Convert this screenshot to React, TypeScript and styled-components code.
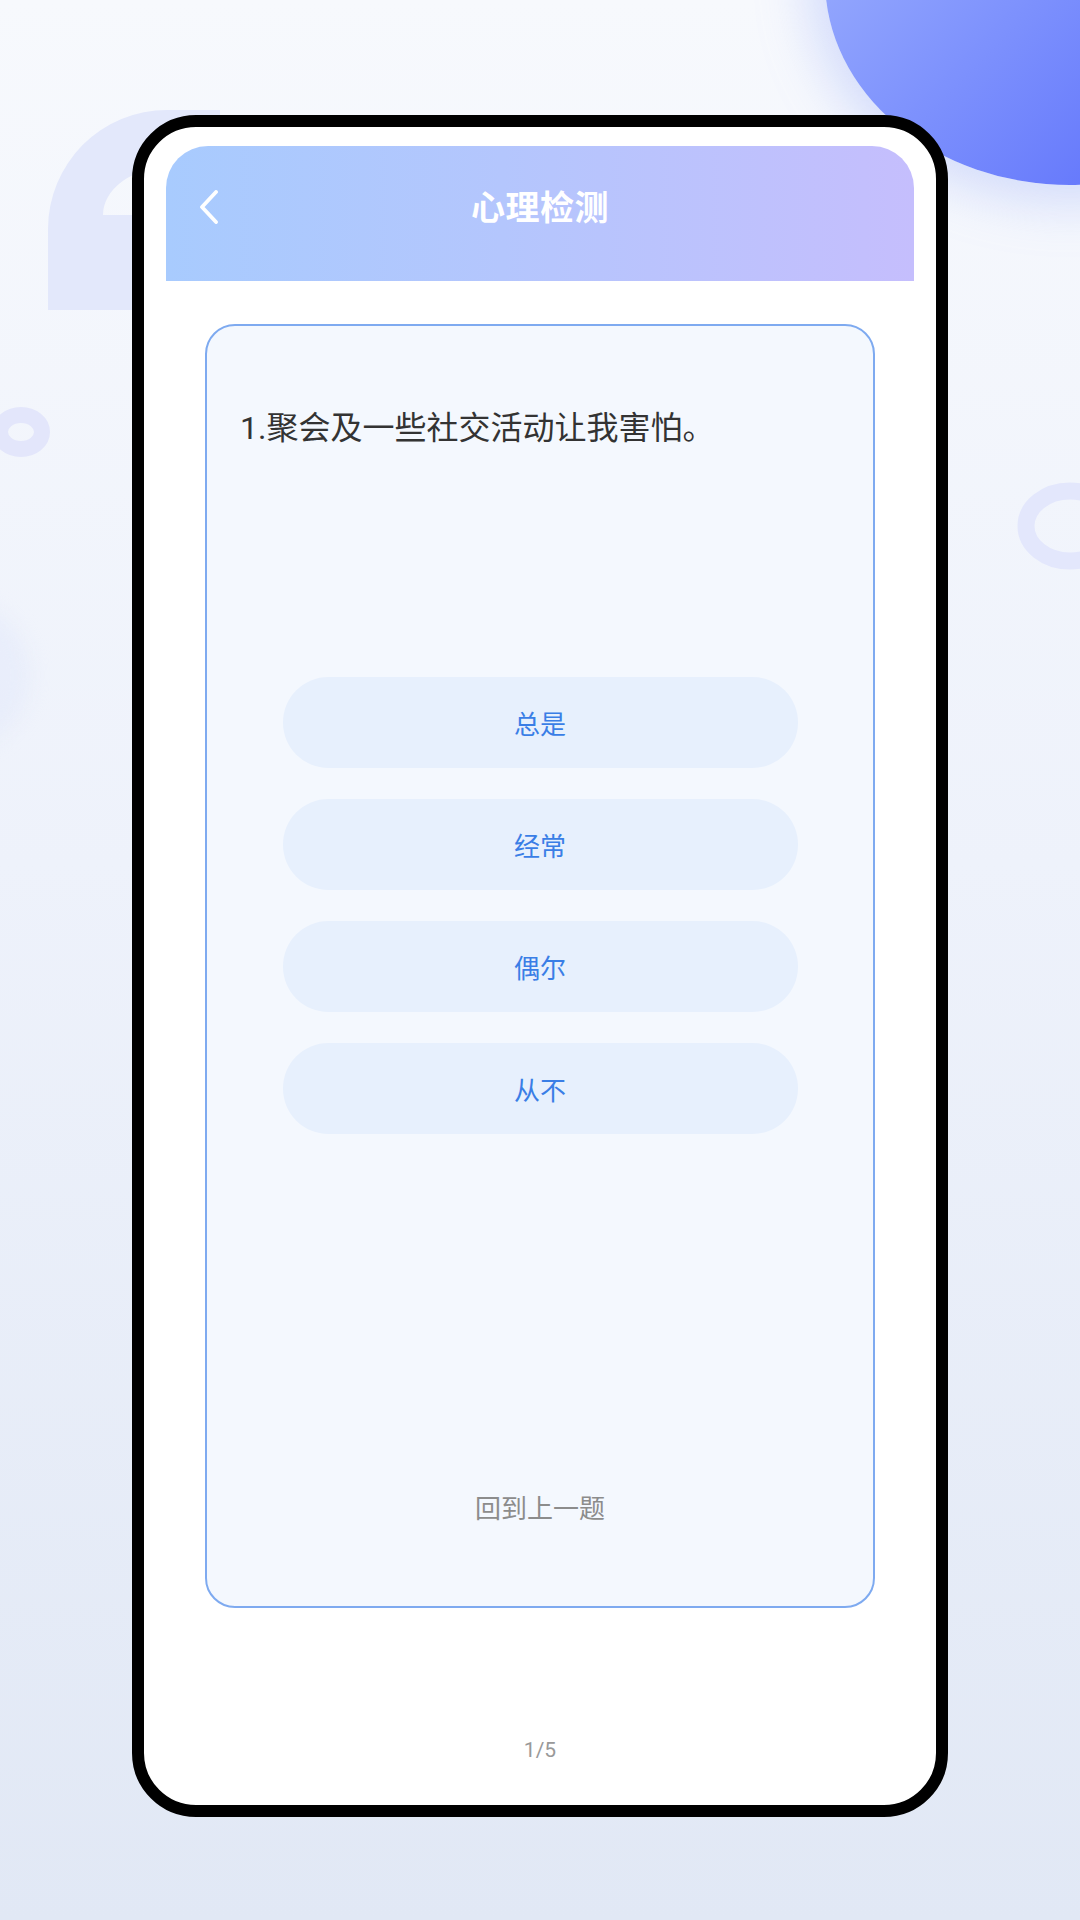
import React from "react"
import styled, { createGlobalStyle } from "styled-components"

const GlobalStyle = createGlobalStyle`
  html, body {
    margin: 0;
    padding: 0;
  }
  body {
    font-family: Roboto, "Noto Sans CJK SC", "Noto Sans", sans-serif;
  }
  * {
    box-sizing: border-box;
  }
`

const OPTIONS = ["总是", "经常", "偶尔", "从不"]

const Page = styled.div`
  position: relative;
  width: 1080px;
  height: 1920px;
  overflow: hidden;
  display: flex;
  justify-content: center;
  padding-top: 115px;
  background: linear-gradient(180deg, #f7f9fd 0%, #eef2fb 45%, #e1e8f5 100%);
`

const BlueOrb = styled.div`
  position: absolute;
  left: 825px;
  top: -225px;
  width: 490px;
  height: 410px;
  border-radius: 50%;
  background: linear-gradient(135deg, #a0b3fd 8%, #7d91fd 48%, #5b6efb 88%);
  box-shadow: 0 0 50px 18px rgba(150, 168, 250, 0.35);
`

const LeftBlob = styled.div`
  position: absolute;
  left: -120px;
  top: 600px;
  width: 150px;
  height: 150px;
  border-radius: 50%;
  background: rgba(224, 230, 250, 0.45);
  filter: blur(10px);
`

const Decor = styled.svg<{ $left: number; $top: number }>`
  position: absolute;
  left: ${p => p.$left}px;
  top: ${p => p.$top}px;
`

const Phone = styled.div`
  position: relative;
  z-index: 1;
  width: 816px;
  height: 1702px;
  border: 12px solid #000;
  border-radius: 64px;
  background: #fff;
  display: flex;
  flex-direction: column;
  padding: 19px 22px 0;
`

const Header = styled.div`
  height: 135px;
  border-radius: 42px 42px 0 0;
  background: linear-gradient(90deg, #a8cbfe 0%, #b4c6fd 45%, #c5befd 100%);
  display: grid;
  grid-template-columns: 1fr auto 1fr;
  align-items: start;
  padding: 39px 32px 0;
`

const BackButton = styled.button`
  justify-self: start;
  margin-top: 5px;
  padding: 0;
  border: none;
  background: none;
  display: flex;
`

const Title = styled.h1`
  margin: 0;
  font-size: 34px;
  line-height: 46px;
  font-weight: 700;
  color: #fff;
  letter-spacing: 0.5px;
`

const Card = styled.div`
  margin: 43px 39px 0;
  height: 1284px;
  border: 2px solid #7eaaf0;
  border-radius: 30px;
  background: #f4f8fe;
  display: flex;
  flex-direction: column;
  padding: 80px 33px 79px;
`

const Question = styled.p`
  margin: 0;
  font-size: 32px;
  line-height: 44px;
  color: #333;
`

const OptionList = styled.div`
  margin-top: 227px;
  align-self: center;
  width: 515px;
  display: flex;
  flex-direction: column;
  gap: 31px;
`

const OptionButton = styled.button`
  height: 91px;
  border: none;
  border-radius: 46px;
  background: #e7f0fd;
  color: #3a7ee6;
  font-family: inherit;
  font-size: 26px;
  cursor: pointer;
`

const PrevLink = styled.div`
  margin-top: auto;
  text-align: center;
  font-size: 26px;
  line-height: 36px;
  color: #8c8c8c;
`

const Pager = styled.div`
  margin-top: 127px;
  text-align: center;
  font-size: 21px;
  line-height: 30px;
  color: #999;
`

const BackIcon = () => (
  <svg width="22" height="34" viewBox="0 0 22 34">
    <polyline
      points="18,2 4,17 18,32"
      fill="none"
      stroke="#fff"
      strokeWidth="3.8"
      strokeLinecap="round"
      strokeLinejoin="round"
    />
  </svg>
)

export default function App() {
  return (
    <>
      <GlobalStyle />
      <Page>
        <BlueOrb />
        <LeftBlob />
        <Decor $left={0} $top={0} width="220" height="330" viewBox="0 0 220 330">
          <path
            d="M48 310 V229 A119 119 0 0 1 167 110 H220 V168 H167 A64 47 0 0 0 103 215 H220 V310 Z"
            fill="#e3e8fb"
          />
        </Decor>
        <Decor $left={-20} $top={397} width="90" height="70" viewBox="-20 397 90 70">
          <ellipse cx="21" cy="432" rx="21" ry="17" fill="none" stroke="#e3e6fb" strokeWidth="16" />
        </Decor>
        <Decor $left={1000} $top={470} width="80" height="112" viewBox="1000 470 80 112">
          <ellipse cx="1070" cy="526" rx="44" ry="35" fill="none" stroke="#e3e7fc" strokeWidth="17" />
        </Decor>

        <Phone>
          <Header>
            <BackButton aria-label="返回">
              <BackIcon />
            </BackButton>
            <Title>心理检测</Title>
          </Header>

          <Card>
            <Question>1.聚会及一些社交活动让我害怕。</Question>
            <OptionList>
              {OPTIONS.map(option => (
                <OptionButton key={option}>{option}</OptionButton>
              ))}
            </OptionList>
            <PrevLink>回到上一题</PrevLink>
          </Card>

          <Pager>1/5</Pager>
        </Phone>
      </Page>
    </>
  )
}
